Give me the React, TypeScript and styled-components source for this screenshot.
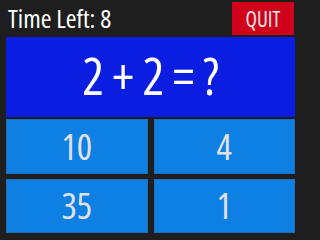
import * as React from 'react';
import styled, { createGlobalStyle } from 'styled-components';

const BG = '#1e1e1e';
const FONT = '"Open Sans", "Noto Sans", sans-serif';

const GlobalStyle = createGlobalStyle`
  html, body {
    margin: 0;
    padding: 0;
    background: ${BG};
  }
`;

const StyledGame = styled.div`
  width: 300px;
  height: 238px;
  box-sizing: border-box;
  padding: 0 5px 5px 6px;
  display: flex;
  flex-direction: column;
  background: ${BG};
  font-family: ${FONT};
  font-stretch: 75%;
`;

const StyledHeader = styled.div`
  height: 37px;
  display: flex;
  align-items: center;
  justify-content: space-between;
`;

const StyledTimer = styled.div`
  color: #ffffff;
  font-size: 26px;
  font-stretch: 87.5%;
  padding-left: 2px;
  padding-bottom: 2px;
`;

const StyledQuitButton = styled.button`
  width: 62px;
  height: 33px;
  margin-right: 1px;
  border: none;
  padding: 0;
  background: #d0021b;
  color: #e6e6e6;
  font-family: ${FONT};
  font-stretch: 75%;
  font-size: 21px;
`;

const StyledQuestion = styled.div`
  height: 80px;
  box-sizing: border-box;
  padding-bottom: 4px;
  display: flex;
  align-items: center;
  justify-content: center;
  background: #0b1de0;
  color: #ffffff;
  font-size: 51px;
  word-spacing: -1px;
`;

const StyledAnswers = styled.div`
  flex: 1;
  margin-top: 2px;
  display: grid;
  grid-template-columns: 1fr 1fr;
  grid-template-rows: 1fr 1fr;
  gap: 5px 6px;
`;

const StyledAnswer = styled.button`
  border: 1px solid #1c6fb8;
  padding: 0;
  background: #0e80e4;
  color: #e2e2e2;
  font-family: ${FONT};
  font-stretch: 75%;
  font-size: 36px;
`;

const answers = [10, 4, 35, 1];

export default function App() {
  return (
    <>
      <GlobalStyle />
      <StyledGame>
        <StyledHeader>
          <StyledTimer>Time Left: 8</StyledTimer>
          <StyledQuitButton>QUIT</StyledQuitButton>
        </StyledHeader>
        <StyledQuestion>2 + 2 = ?</StyledQuestion>
        <StyledAnswers>
          {answers.map((a) => (
            <StyledAnswer key={a}>{a}</StyledAnswer>
          ))}
        </StyledAnswers>
      </StyledGame>
    </>
  );
}
